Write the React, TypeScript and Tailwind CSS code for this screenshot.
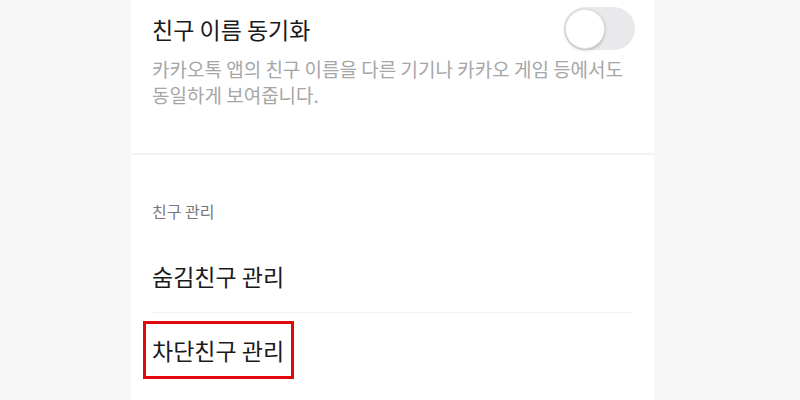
import React from "react";

export default function App() {
  return (
    <div
      className="w-[800px] h-[400px] overflow-hidden bg-[#f7f7f7] flex"
      style={{ fontFamily: "'Noto Sans CJK KR', 'Noto Sans', sans-serif" }}
    >
      <div className="ml-[131px] w-[523px] h-full bg-white flex flex-col">
        <div className="pl-[21px] pr-[19px] pt-[7px] pb-[45px]">
          <div className="flex items-center justify-between">
            <div className="text-[23px] leading-[30px] text-[#1a1a1a]">친구 이름 동기화</div>
            <div className="relative w-[71px] h-[43px] rounded-full bg-[#e9e9eb]">
              <div className="absolute left-[1px] top-[1.5px] w-[40px] h-[40px] rounded-full bg-white shadow-[0_1px_3px_rgba(0,0,0,0.25)] border border-[#e2e2e2]" />
            </div>
          </div>
          <p className="mt-[6px] text-[19px] leading-[26px] text-[#a6a6a6]">
            카카오톡 앱의 친구 이름을 다른 기기나 카카오 게임 등에서도
            <br />
            동일하게 보여줍니다.
          </p>
        </div>
        <div className="h-[2px] bg-[#f3f3f3]" />
        <div className="pl-[21px] pr-[21px]">
          <div className="pt-[46px] text-[16px] leading-[20px] text-[#777777]">친구 관리</div>
          <div className="mt-[18px] h-[74px] flex items-center border-b border-[#f2f2f2]">
            <span className="text-[23px] leading-[30px] text-[#1a1a1a]">숨김친구 관리</span>
          </div>
          <div className="h-[74px] flex items-center">
            <span className="relative text-[23px] leading-[30px] text-[#1a1a1a]">
              차단친구 관리
              <span className="absolute top-[-14px] bottom-[-14px] left-[-9px] right-[-10px] border-[3px] border-[#e0080b]" />
            </span>
          </div>
        </div>
      </div>
    </div>
  );
}
